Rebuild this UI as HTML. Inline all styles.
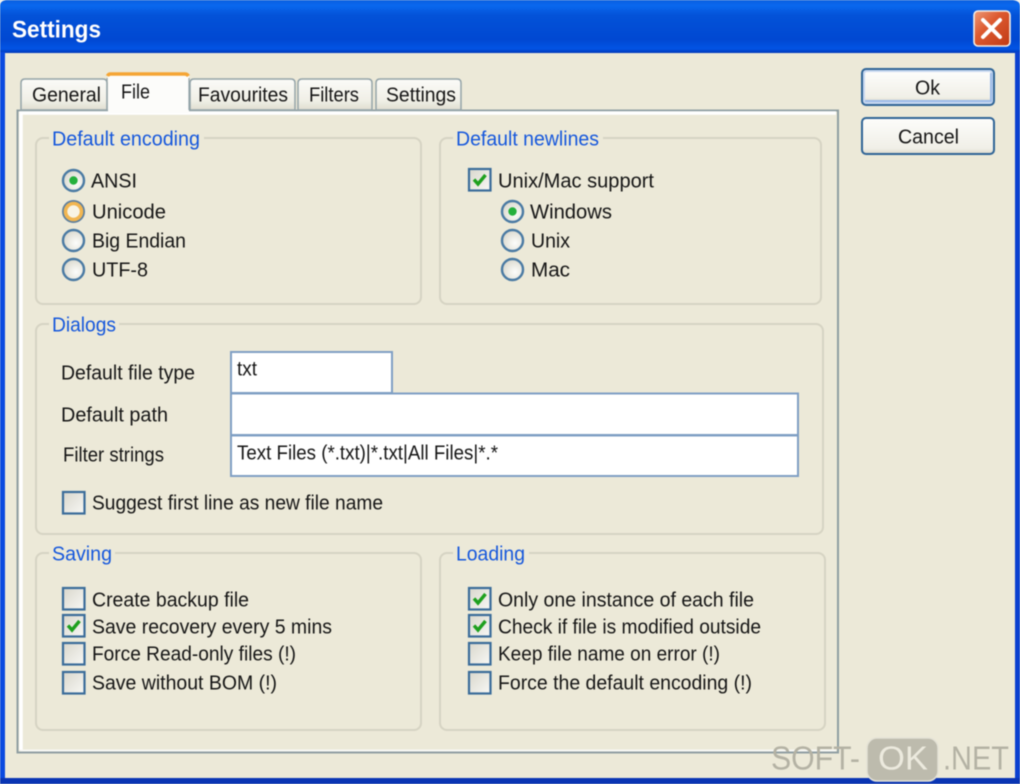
<!DOCTYPE html>
<html><head><meta charset="utf-8"><title>Settings</title>
<style>
html,body{margin:0;padding:0;background:#ece9d8;width:1020px;height:784px;overflow:hidden}
svg{display:block;filter:blur(.5px)}
text{font-family:"Liberation Sans",sans-serif;font-size:20.5px;fill:#151515;transform:translateY(-.6px)}
.b{fill:#1557dc}
.w{fill:#b4b2a4;font-size:33px}
.g{fill:none;stroke:#d6d3c3;stroke-width:2}
.l{fill:#ece9d8}
</style></head><body>
<svg width="1020" height="784" viewBox="0 0 1020 784" xmlns="http://www.w3.org/2000/svg">
<defs>
<linearGradient id="tb" x1="0" y1="0" x2="0" y2="1">
<stop offset="0" stop-color="#0a5fe0"/><stop offset=".1" stop-color="#0a68ee"/><stop offset=".3" stop-color="#0352d8"/><stop offset=".75" stop-color="#0148d2"/><stop offset=".92" stop-color="#0254e4"/><stop offset="1" stop-color="#0138b8"/>
</linearGradient>
<linearGradient id="cl" x1="0" y1="0" x2="1" y2="1"><stop offset="0" stop-color="#ec9a78"/><stop offset=".4" stop-color="#dd5a30"/><stop offset="1" stop-color="#c03a15"/></linearGradient>
<linearGradient id="tab" x1="0" y1="0" x2="0" y2="1"><stop offset="0" stop-color="#fbfbf8"/><stop offset=".7" stop-color="#f0efe6"/><stop offset="1" stop-color="#dfddd0"/></linearGradient>
<linearGradient id="btn" x1="0" y1="0" x2="0" y2="1"><stop offset="0" stop-color="#fdfdfb"/><stop offset=".85" stop-color="#f0efe7"/><stop offset="1" stop-color="#dcd8ca"/></linearGradient>
<linearGradient id="cb" x1="0" y1="0" x2="1" y2="1"><stop offset="0" stop-color="#d9d7cc"/><stop offset="1" stop-color="#f8f8f5"/></linearGradient>
<radialGradient id="rd" cx=".62" cy=".62" r=".7"><stop offset="0" stop-color="#fdfdfb"/><stop offset="1" stop-color="#d8d6ca"/></radialGradient>
<g id="box"><rect x="1" y="1" width="21.500" height="21.500" fill="url(#cb)" stroke="#3a6c9a" stroke-width="2.200"/></g>
<g id="chk"><use href="#box"/><path d="M6 11.500l4 4.500 7.500-9" fill="none" stroke="#1ea01e" stroke-width="3.400"/></g>
<g id="rad"><circle r="10.500" fill="url(#rd)" stroke="#4a7aa3" stroke-width="2.400"/></g>
<g id="rads"><use href="#rad"/><circle r="4.200" fill="#25b03c"/></g>
</defs>

<!-- window frame -->
<rect width="1020" height="784" fill="#0a3fd0"/>
<rect x="0" y="0" width="1020" height="53" fill="url(#tb)"/>
<path d="M0 0h6q-6 1-6 6zM1020 0h-7q7 1 7 6z" fill="#f4f4f0"/>
<rect x="0" y="52" width="5" height="732" fill="#0a4ae0"/>
<rect x="1015" y="52" width="5" height="732" fill="#0a40d0"/>
<rect x="0" y="778" width="1020" height="6" fill="#0a35b4"/>
<rect x="5" y="53" width="1010" height="725" fill="#ece9d8"/>
<text x="12" y="38" textLength="89" lengthAdjust="spacingAndGlyphs" style="font-weight:bold;font-size:24px;fill:#0a2f90" transform="translate(1.500 1.500)">Settings</text>
<text x="12" y="38" textLength="89" lengthAdjust="spacingAndGlyphs" style="font-weight:bold;font-size:24px;fill:#fff">Settings</text>

<!-- close -->
<rect x="974" y="11" width="36" height="35" rx="4" fill="url(#cl)" stroke="#f3efe8" stroke-width="1.600"/>
<path d="M983 20l17 17M1000 20l-17 17" stroke="#fff" stroke-width="4" stroke-linecap="round"/>

<!-- tab panel -->
<rect x="17.500" y="110.500" width="820.500" height="642" fill="#ece9d8" stroke="#8f9ea2" stroke-width="2"/>
<path d="M21 750V113H836" fill="none" stroke="#fff" stroke-width="3.500"/>
<path d="M20 750.500H836" fill="none" stroke="#f8f8f4" stroke-width="2"/>

<!-- tabs -->
<path d="M21 110V83q0-4 4-4H103q4 0 4 4V110z" fill="url(#tab)" stroke="#93a3a8" stroke-width="1.500"/>
<path d="M190 110V83q0-4 4-4H291q4 0 4 4V110z" fill="url(#tab)" stroke="#93a3a8" stroke-width="1.500"/>
<path d="M298 110V83q0-4 4-4H368q4 0 4 4V110z" fill="url(#tab)" stroke="#93a3a8" stroke-width="1.500"/>
<path d="M376 110V83q0-4 4-4H457q4 0 4 4V110z" fill="url(#tab)" stroke="#93a3a8" stroke-width="1.500"/>
<rect x="108" y="75" width="81" height="38" fill="#fcfcfa"/>
<path d="M107 110V78M189 78V110" fill="none" stroke="#93a3a8" stroke-width="1.200"/>
<path d="M107.500 76q1-2 3-2H185q2 0 3.500 2" fill="none" stroke="#f5a534" stroke-width="3.500"/>
<text x="32" y="102" textLength="69" lengthAdjust="spacingAndGlyphs">General</text>
<text x="121" y="99" textLength="29" lengthAdjust="spacingAndGlyphs">File</text>
<text x="198" y="102" textLength="90" lengthAdjust="spacingAndGlyphs">Favourites</text>
<text x="309" y="102" textLength="50" lengthAdjust="spacingAndGlyphs">Filters</text>
<text x="386" y="102" textLength="70" lengthAdjust="spacingAndGlyphs">Settings</text>

<!-- buttons -->
<rect x="862" y="69" width="132" height="36" rx="4" fill="#c8d8f0" stroke="#2f6496" stroke-width="2"/>
<rect x="865" y="72" width="126" height="30" rx="2" fill="url(#btn)"/>
<path d="M865 101H991V73" fill="none" stroke="#9dbbe8" stroke-width="2"/>
<text x="915" y="95" textLength="25" lengthAdjust="spacingAndGlyphs">Ok</text>
<rect x="862" y="118" width="132" height="36" rx="4" fill="url(#btn)" stroke="#2f6496" stroke-width="2"/>
<text x="898" y="144" textLength="61" lengthAdjust="spacingAndGlyphs">Cancel</text>

<!-- groups -->
<rect class="g" x="36" y="138" width="385" height="166" rx="7"/>
<rect class="g" x="440" y="138" width="381" height="166" rx="7"/>
<rect class="g" x="36" y="324" width="787" height="210" rx="7"/>
<rect class="g" x="36" y="553" width="385" height="177" rx="7"/>
<rect class="g" x="440" y="553" width="385" height="177" rx="7"/>
<rect class="l" x="49" y="128" width="155" height="20"/>
<rect class="l" x="453" y="128" width="150" height="20"/>
<rect class="l" x="49" y="314" width="70" height="20"/>
<rect class="l" x="49" y="543" width="66" height="20"/>
<rect class="l" x="453" y="543" width="76" height="20"/>
<text class="b" x="52" y="146" textLength="148" lengthAdjust="spacingAndGlyphs">Default encoding</text>
<text class="b" x="456" y="146" textLength="143" lengthAdjust="spacingAndGlyphs">Default newlines</text>
<text class="b" x="52" y="332" textLength="64" lengthAdjust="spacingAndGlyphs">Dialogs</text>
<text class="b" x="52" y="561" textLength="60" lengthAdjust="spacingAndGlyphs">Saving</text>
<text class="b" x="456" y="561" textLength="69" lengthAdjust="spacingAndGlyphs">Loading</text>

<!-- encoding -->
<use href="#rads" x="73.500" y="180.500"/>
<circle cx="73.500" cy="211.500" r="10.500" fill="#fbf6e6" stroke="#5d7f9e" stroke-width="2"/>
<circle cx="73.500" cy="211.500" r="8" fill="#f8f4e4" stroke="#f2b650" stroke-width="3.600"/>
<use href="#rad" x="73.500" y="240.500"/>
<use href="#rad" x="73.500" y="269.500"/>
<text x="91" y="188" textLength="46" lengthAdjust="spacingAndGlyphs">ANSI</text>
<text x="92" y="219" textLength="74" lengthAdjust="spacingAndGlyphs">Unicode</text>
<text x="92" y="248" textLength="94" lengthAdjust="spacingAndGlyphs">Big Endian</text>
<text x="92" y="277" textLength="56" lengthAdjust="spacingAndGlyphs">UTF-8</text>

<!-- newlines -->
<use href="#chk" x="468" y="168"/>
<text x="498" y="188" textLength="156" lengthAdjust="spacingAndGlyphs">Unix/Mac support</text>
<use href="#rads" x="512.500" y="211.500"/>
<use href="#rad" x="512.500" y="240.500"/>
<use href="#rad" x="512.500" y="269.500"/>
<text x="530" y="219" textLength="82" lengthAdjust="spacingAndGlyphs">Windows</text>
<text x="531" y="248" textLength="39" lengthAdjust="spacingAndGlyphs">Unix</text>
<text x="531" y="277" textLength="39" lengthAdjust="spacingAndGlyphs">Mac</text>

<!-- dialogs -->
<text x="61" y="380" textLength="134" lengthAdjust="spacingAndGlyphs">Default file type</text>
<text x="61" y="422" textLength="107" lengthAdjust="spacingAndGlyphs">Default path</text>
<text x="63" y="462" textLength="101" lengthAdjust="spacingAndGlyphs">Filter strings</text>
<rect x="231" y="352" width="161" height="41" fill="#fff" stroke="#7f9fc4" stroke-width="2"/>
<rect x="231" y="393.500" width="567" height="41.500" fill="#fff" stroke="#7f9fc4" stroke-width="2"/>
<rect x="231" y="435.500" width="567" height="40.500" fill="#fff" stroke="#7f9fc4" stroke-width="2"/>
<text x="237" y="376" textLength="20" lengthAdjust="spacingAndGlyphs">txt</text>
<text x="237" y="460" textLength="261" lengthAdjust="spacingAndGlyphs">Text Files (*.txt)|*.txt|All Files|*.*</text>
<use href="#box" x="62" y="491"/>
<text x="92" y="510" textLength="291" lengthAdjust="spacingAndGlyphs">Suggest first line as new file name</text>

<!-- saving -->
<use href="#box" x="62" y="587"/>
<use href="#chk" x="62" y="614"/>
<use href="#box" x="62" y="642"/>
<use href="#box" x="62" y="671"/>
<text x="92" y="607" textLength="157" lengthAdjust="spacingAndGlyphs">Create backup file</text>
<text x="92" y="634" textLength="240" lengthAdjust="spacingAndGlyphs">Save recovery every 5 mins</text>
<text x="92" y="661" textLength="204" lengthAdjust="spacingAndGlyphs">Force Read-only files (!)</text>
<text x="92" y="690" textLength="185" lengthAdjust="spacingAndGlyphs">Save without BOM (!)</text>

<!-- loading -->
<use href="#chk" x="468" y="587"/>
<use href="#chk" x="468" y="614"/>
<use href="#box" x="468" y="642"/>
<use href="#box" x="468" y="671"/>
<text x="498" y="607" textLength="256" lengthAdjust="spacingAndGlyphs">Only one instance of each file</text>
<text x="498" y="634" textLength="263" lengthAdjust="spacingAndGlyphs">Check if file is modified outside</text>
<text x="498" y="661" textLength="222" lengthAdjust="spacingAndGlyphs">Keep file name on error (!)</text>
<text x="498" y="690" textLength="254" lengthAdjust="spacingAndGlyphs">Force the default encoding (!)</text>

<!-- watermark -->
<text class="w" x="771" y="770" textLength="89" lengthAdjust="spacingAndGlyphs">SOFT-</text>
<rect x="867" y="738" width="71" height="43" rx="10" fill="#bdbbad" stroke="#e4e2d6" stroke-width="1.500"/>
<text class="w" x="878" y="770" textLength="50" lengthAdjust="spacingAndGlyphs" style="fill:#eceade">OK</text>
<text class="w" x="943" y="770" textLength="66" lengthAdjust="spacingAndGlyphs">.NET</text>
</svg>
</body></html>
